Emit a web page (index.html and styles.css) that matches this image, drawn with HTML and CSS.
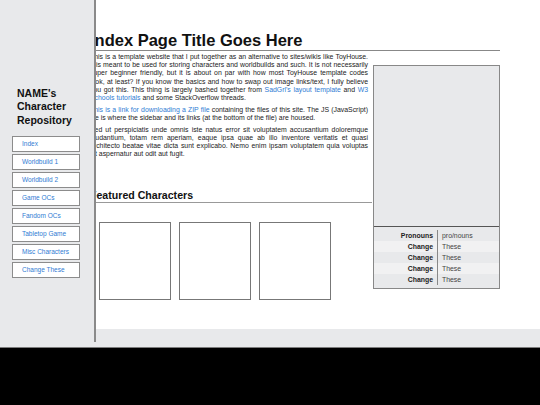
FILE: index.html
```html
<!DOCTYPE html>
<html lang="en">

<head>
  <meta charset="UTF-8">
  <meta name="viewport" content="width=device-width, initial-scale=1.0">
  <title>Index</title>
  <link rel="stylesheet" href="styles.css">
</head>

<body>
  <div class="screen">
    <main class="main">
      <h1 class="page-title">Index Page Title Goes Here</h1>
      <div class="content">
        <div class="text-col">
          <p>This is a template website that I put together as an alternative to sites/wikis like ToyHouse. It is meant to be used for storing characters and worldbuilds and such. It is not necessarily super beginner friendly, but it is about on par with how most ToyHouse template codes look, at least? If you know the basics and how to swap out image links/text, I fully believe you got this. This thing is largely bashed together from <a href="#">SadGrl's layout template</a> and <a href="#">W3 Schools tutorials</a> and some StackOverflow threads.</p>
          <p><a href="#">This is a link for downloading a ZIP file</a> containing the files of this site. The JS (JavaScript) file is where the sidebar and its links (at the bottom of the file) are housed.</p>
          <p>Sed ut perspiciatis unde omnis iste natus error sit voluptatem accusantium doloremque laudantium, totam rem aperiam, eaque ipsa quae ab illo inventore veritatis et quasi architecto beatae vitae dicta sunt explicabo. Nemo enim ipsam voluptatem quia voluptas sit aspernatur aut odit aut fugit.</p>

          <h2 class="section-title">Featured Characters</h2>
          <div class="featured">
            <div class="char-box"></div>
            <div class="char-box"></div>
            <div class="char-box"></div>
          </div>
        </div>

        <aside class="infobox">
          <div class="info-image"></div>
          <table class="info-table">
            <tr><td class="label">Pronouns</td><td class="value">pro/nouns</td></tr>
            <tr><td class="label">Change</td><td class="value">These</td></tr>
            <tr><td class="label">Change</td><td class="value">These</td></tr>
            <tr><td class="label">Change</td><td class="value">These</td></tr>
            <tr><td class="label">Change</td><td class="value">These</td></tr>
          </table>
        </aside>
      </div>
    </main>

    <nav class="sidebar">
      <h2 class="site-name">NAME's<br>Character<br>Repository</h2>
      <ul class="nav-links">
        <li><a href="#">Index</a></li>
        <li><a href="#">Worldbuild 1</a></li>
        <li><a href="#">Worldbuild 2</a></li>
        <li><a href="#">Game OCs</a></li>
        <li><a href="#">Fandom OCs</a></li>
        <li><a href="#">Tabletop Game</a></li>
        <li><a href="#">Misc Characters</a></li>
        <li><a href="#">Change These</a></li>
      </ul>
    </nav>
  </div>
</body>

</html>
```

FILE: styles.css
```css
body {
  font-family: "Liberation Sans", Arial, sans-serif;
  background-color: #000;
  margin: 0;
  padding: 0;
}

a {
  color: #2f7bd3;
  text-decoration: none;
}

.screen {
  position: relative;
  height: 347px;
  background-color: #e8e9eb;
  border-bottom: 1px solid #7c7c7c;
  overflow: hidden;
}

/* sidebar sits on top of the page */
.sidebar {
  position: absolute;
  top: 0;
  left: 0;
  width: 94px;
  height: 342px;
  background-color: #e8e9eb;
  border-right: 2px solid #8a8a8a;
}

.site-name {
  font-size: 10.5px;
  line-height: 13.3px;
  color: #111;
  margin: 0 0 9.5px;
  padding: 87px 0 0 17px;
}

.nav-links {
  list-style: none;
  margin: 0;
  padding: 0 0 0 12px;
}

.nav-links li {
  margin-bottom: 2px;
}

.nav-links a {
  display: block;
  box-sizing: border-box;
  width: 68px;
  height: 16px;
  padding-left: 9px;
  background-color: #fff;
  border: 1px solid #8c8c8c;
  font-size: 6.5px;
  line-height: 14px;
}

.main {
  box-sizing: border-box;
  height: 329px;
  background-color: #fff;
  padding: 30px 40px 0 90px;
  color: #222;
}

.page-title {
  font-size: 16.5px;
  line-height: 20px;
  color: #111;
  margin: 0;
  border-bottom: 1px solid #888;
}

.content {
  display: flex;
  gap: 1px;
}

.text-col {
  width: 282px;
  padding-top: 2px;
}

.text-col p {
  font-size: 6.9px;
  line-height: 8.2px;
  text-align: justify;
  margin: 0 4px 3.5px 0;
}

.section-title {
  font-size: 10.6px;
  line-height: 13px;
  color: #111;
  margin: 31px 0 0;
  border-bottom: 1px solid #999;
}

.featured {
  display: flex;
  gap: 8px;
  padding: 18.5px 0 0 9px;
}

.char-box {
  box-sizing: border-box;
  width: 72px;
  height: 78px;
  border: 1px solid #777;
}

.infobox {
  width: 127px;
  margin-top: 14px;
  align-self: flex-start;
  box-sizing: border-box;
  border: 1px solid #888;
  background-color: #e8e9eb;
  padding-bottom: 3px;
}

.info-image {
  height: 160px;
  border-bottom: 1px solid #555;
  margin-bottom: 3px;
}

.info-table {
  width: 100%;
  border-collapse: collapse;
  font-size: 6.9px;
  line-height: 11px;
}

.info-table td {
  padding: 0;
}

.info-table tr:nth-child(even) {
  background-color: #f1f1f2;
}

.info-table td.label {
  width: 59px;
  padding-right: 4px;
  text-align: right;
  font-weight: bold;
  color: #222;
  border-right: 1px solid #888;
}

.info-table td.value {
  padding-left: 4px;
  color: #444;
}
```
